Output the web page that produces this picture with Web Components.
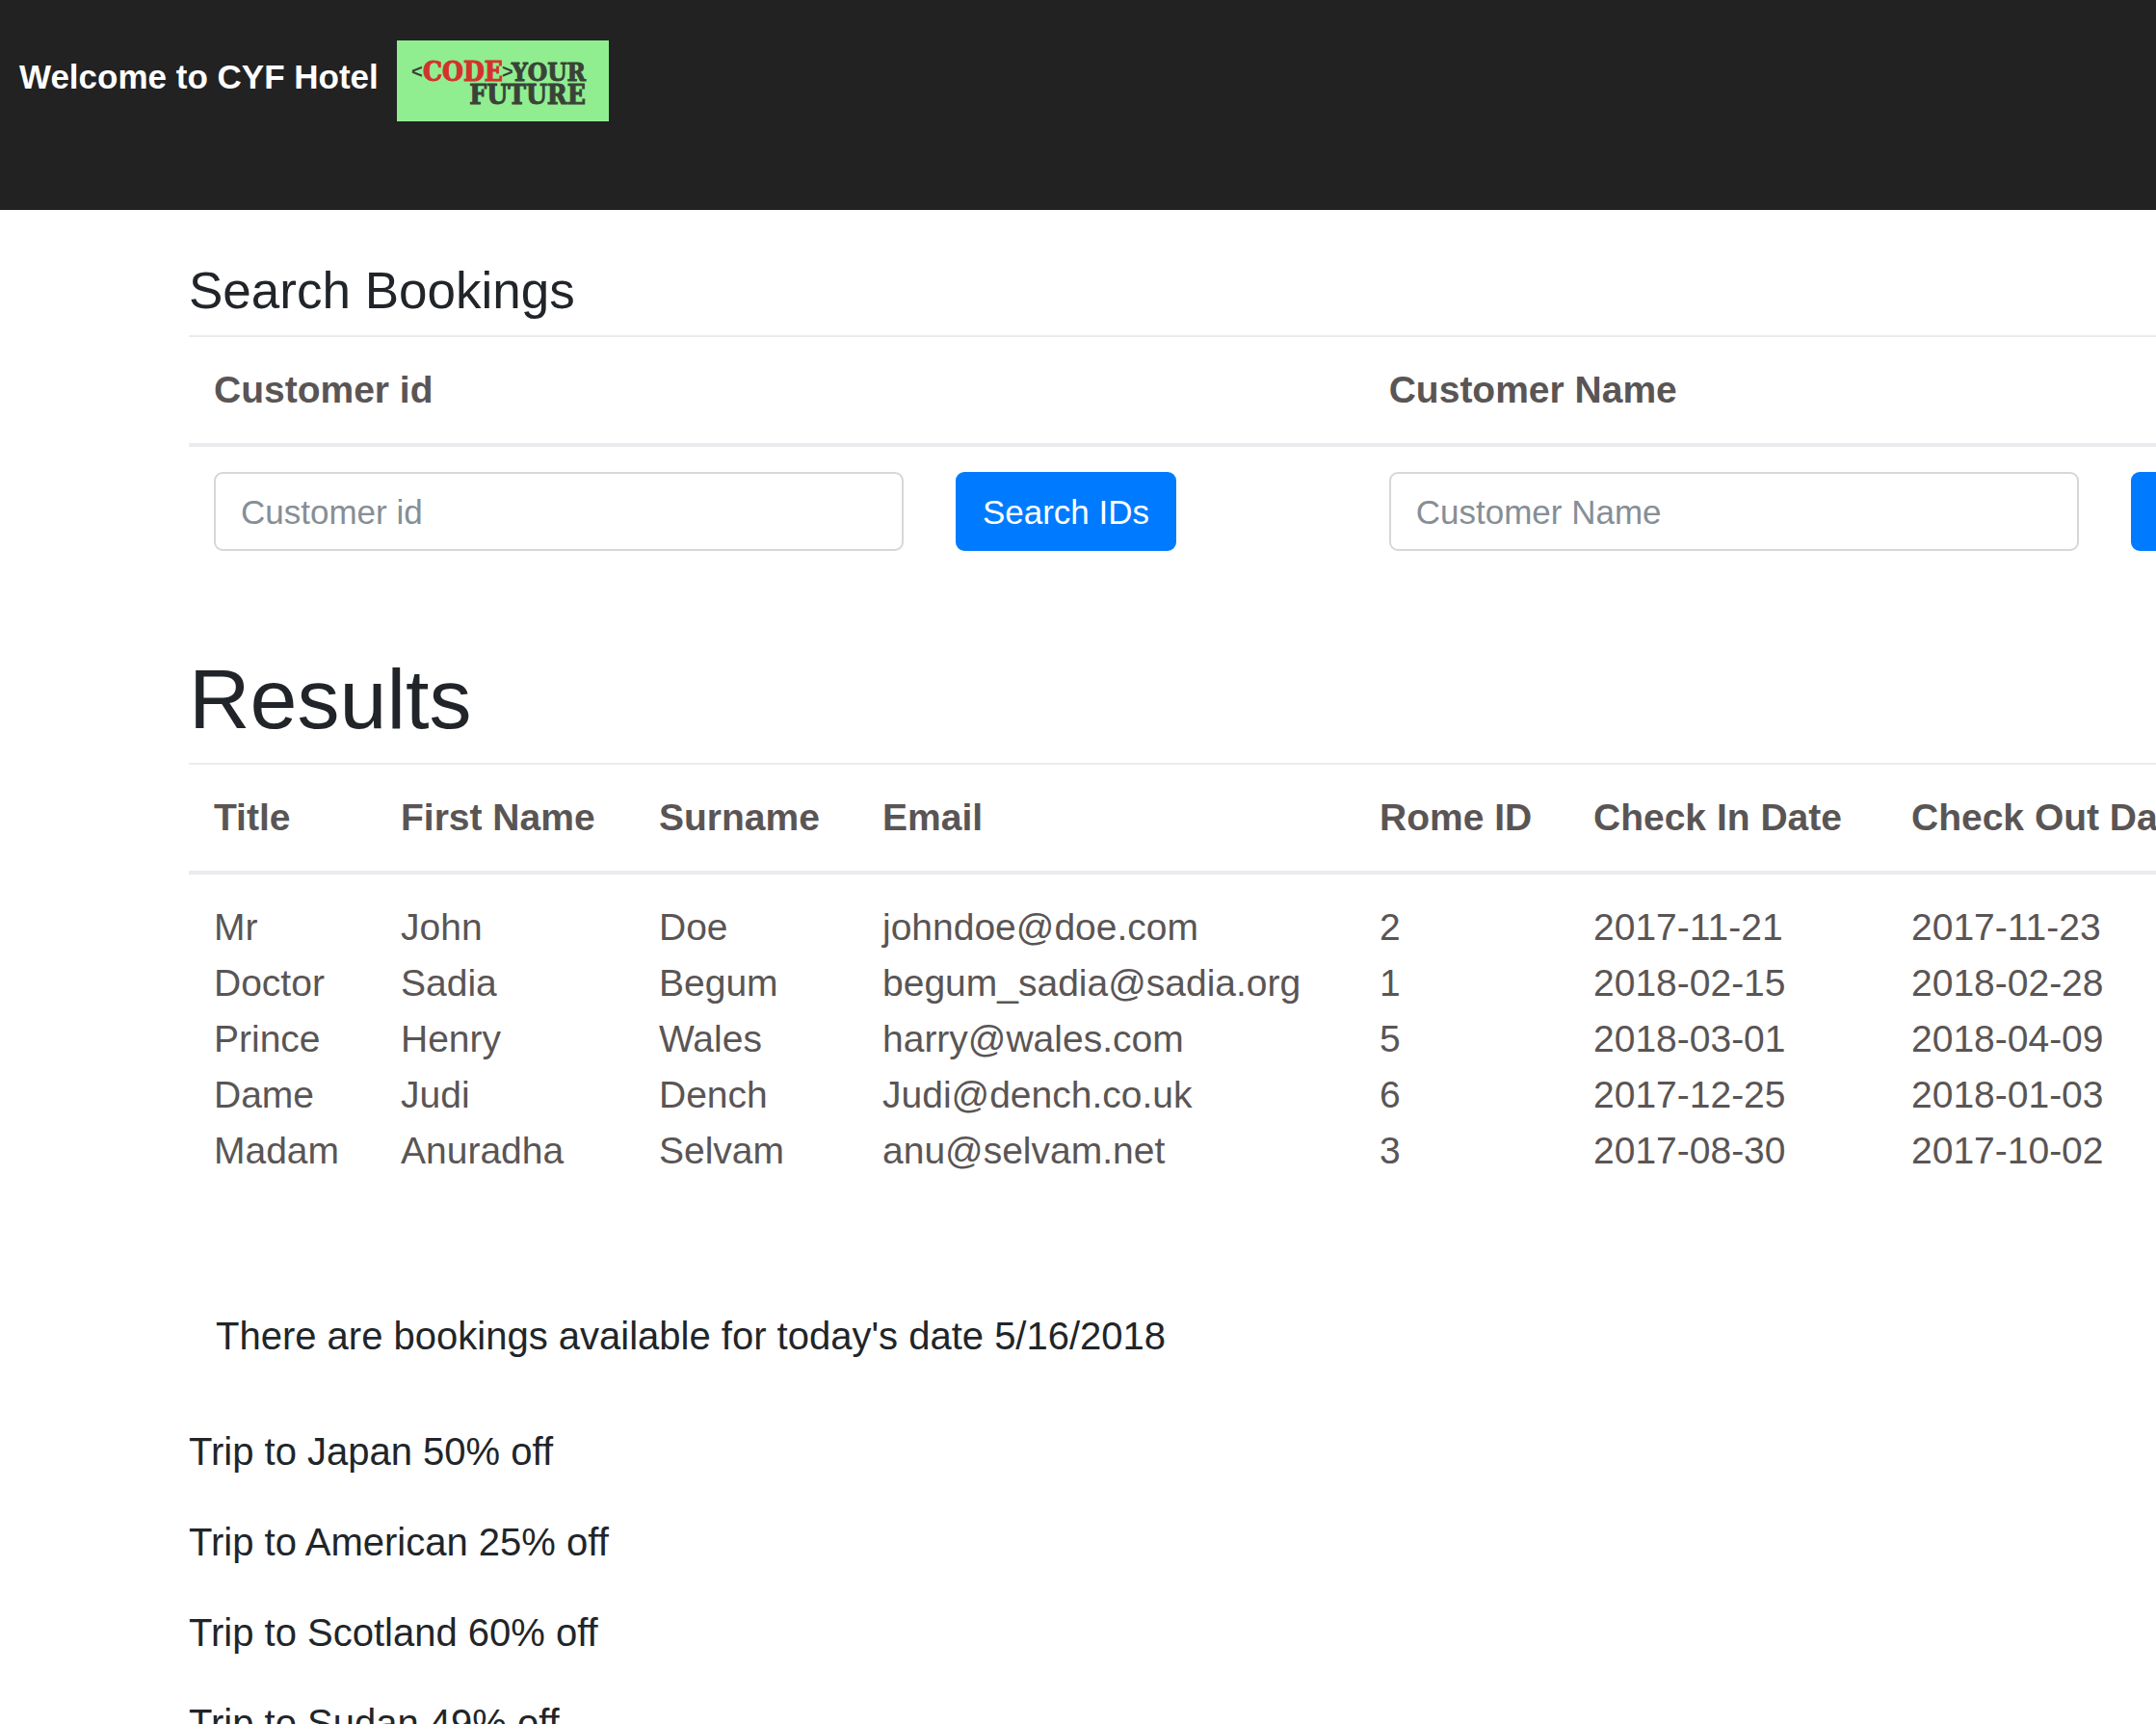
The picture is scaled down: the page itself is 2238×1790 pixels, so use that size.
<!DOCTYPE html>
<html lang="en">
<head>
<meta charset="utf-8">
<title>CYF Hotel</title>
<style>
  body {
    margin: 0;
    height: 100vh;
    overflow: hidden;
    background: #fff;
    color: #212529;
    font-family: "Liberation Sans", Arial, sans-serif;
    font-size: 39px;
    line-height: 58px;
    --table-text: #5a5555;
    --line: #e9ebee;
  }
</style>
</head>
<body>
<hotel-app></hotel-app>

<script>
const logoTemplate = `
  <style>
    :host { display: block; width: 220px; height: 84px; background: #90ee90; }
    svg { display: block; }
    text {
      font-family: "DejaVu Serif Condensed", "DejaVu Serif", serif;
      font-weight: bold;
      font-size: 28px;
      fill: #3a4238;
      stroke: #3a4238;
    }
    .code { fill: #d2322d; stroke: #d2322d; }
    .your { font-size: 26px; }
    .bracket { font-family: "Liberation Sans", sans-serif; font-size: 20px; stroke: none; }
  </style>
  <svg width="220" height="84" viewBox="0 0 220 84" role="img" aria-label="Code Your Future">
    <text class="bracket" x="15" y="39">&lt;</text>
    <text class="code" x="27" y="42">CODE</text>
    <text class="bracket" x="109" y="39">&gt;</text>
    <text class="your" x="196" y="42" text-anchor="end">YOUR</text>
    <text x="196" y="66" text-anchor="end">FUTURE</text>
  </svg>`;

class CyfLogo extends HTMLElement {
  constructor() {
    super();
    this.attachShadow({ mode: 'open' }).innerHTML = logoTemplate;
  }
}

const headerTemplate = `
  <style>
    :host { display: block; }
    header {
      display: flex;
      align-items: flex-start;
      gap: 19px;
      padding: 42px 20px 92px;
      background: #222;
      color: #fff;
    }
    h1 { margin: 0; font-size: 35px; line-height: 76px; }
  </style>
  <header>
    <h1><slot></slot></h1>
    <cyf-logo></cyf-logo>
  </header>`;

class HotelHeader extends HTMLElement {
  constructor() {
    super();
    this.attachShadow({ mode: 'open' }).innerHTML = headerTemplate;
  }
}

const searchFieldTemplate = `
  <style>
    :host { display: block; color: var(--table-text); }
    label {
      display: block;
      padding: 26px;
      border-top: 2px solid var(--line);
      border-bottom: 4px solid var(--line);
      font-weight: bold;
    }
    form {
      display: grid;
      grid-template-columns: 9fr 5fr;
      gap: 54px;
      padding: 26px;
    }
    input, button {
      box-sizing: border-box;
      height: 82px;
      padding: 2px 26px 0;
      border: 2px solid #d5d7da;
      border-radius: 9px;
      font: inherit;
      font-size: 35px;
    }
    input { width: 100%; background: #fff; color: #495057; }
    input::placeholder { color: #868e96; opacity: 1; }
    button {
      justify-self: start;
      border-color: #007bff;
      background: #007bff;
      color: #fff;
      white-space: nowrap;
      cursor: pointer;
    }
  </style>
  <label for="query"></label>
  <form>
    <input id="query" type="text">
    <button type="submit"><slot></slot></button>
  </form>`;

class SearchField extends HTMLElement {
  constructor() {
    super();
    this.attachShadow({ mode: 'open' }).innerHTML = searchFieldTemplate;
  }

  connectedCallback() {
    var label = this.getAttribute('label');
    this.shadowRoot.querySelector('label').textContent = label;
    this.shadowRoot.querySelector('input').placeholder = label;
    this.shadowRoot.querySelector('form').onsubmit = function (event) {
      event.preventDefault();
    };
  }
}

const bookings = [
  ['Mr', 'John', 'Doe', 'johndoe@doe.com', '2', '2017-11-21', '2017-11-23'],
  ['Doctor', 'Sadia', 'Begum', 'begum_sadia@sadia.org', '1', '2018-02-15', '2018-02-28'],
  ['Prince', 'Henry', 'Wales', 'harry@wales.com', '5', '2018-03-01', '2018-04-09'],
  ['Dame', 'Judi', 'Dench', 'Judi@dench.co.uk', '6', '2017-12-25', '2018-01-03'],
  ['Madam', 'Anuradha', 'Selvam', 'anu@selvam.net', '3', '2017-08-30', '2017-10-02']
];

const resultsTemplate = `
  <style>
    :host { display: block; }
    table {
      width: 100%;
      table-layout: fixed;
      border-collapse: separate;
      border-spacing: 0;
      color: var(--table-text);
      white-space: nowrap;
    }
    th {
      padding: 26px;
      border-top: 2px solid var(--line);
      border-bottom: 4px solid var(--line);
      text-align: left;
    }
    td { padding: 0 26px; }
    tbody tr:first-child td { padding-top: 26px; }
    tbody tr:last-child td { padding-bottom: 26px; }
  </style>
  <table>
    <colgroup>
      <col style="width: 194px">
      <col style="width: 268px">
      <col style="width: 232px">
      <col style="width: 516px">
      <col style="width: 222px">
      <col style="width: 330px">
      <col>
    </colgroup>
    <thead>
      <tr>
        <th>Title</th><th>First Name</th><th>Surname</th><th>Email</th>
        <th>Rome ID</th><th>Check In Date</th><th>Check Out Date</th>
      </tr>
    </thead>
    <tbody></tbody>
  </table>`;

class BookingResults extends HTMLElement {
  constructor() {
    super();
    this.attachShadow({ mode: 'open' }).innerHTML = resultsTemplate;
  }

  connectedCallback() {
    this.shadowRoot.querySelector('tbody').innerHTML = bookings.map(function (row) {
      return '<tr>' + row.map(cell => `<td>${cell}</td>`).join('') + '</tr>';
    }).join('');
  }
}

const offersTemplate = `
  <style>
    :host { display: block; }
    ul {
      display: flex;
      flex-direction: column;
      gap: 36px;
      margin: 0;
      padding: 0;
      list-style: none;
    }
  </style>
  <ul>
    <li>Trip to Japan 50% off</li>
    <li>Trip to American 25% off</li>
    <li>Trip to Scotland 60% off</li>
    <li>Trip to Sudan 49% off</li>
  </ul>`;

class TripOffers extends HTMLElement {
  constructor() {
    super();
    this.attachShadow({ mode: 'open' }).innerHTML = offersTemplate;
  }
}

const appTemplate = `
  <style>
    :host { display: block; }
    /* the bookings grid is wider than the window and runs off to the right */
    main { width: 109%; margin-left: 196px; }
    h2, h3, p { margin: 0; font-weight: normal; }
    h3 { padding: 55px 0 17px; font-size: 53px; line-height: 58px; }
    h2 { padding: 80px 0 18px; font-size: 88px; line-height: 96px; }
    .search { display: grid; grid-template-columns: 1fr 1fr; }
    .today { padding: 108px 28px 62px; }
    .today, trip-offers { font-size: 40px; }
  </style>
  <hotel-header>Welcome to CYF Hotel</hotel-header>
  <main>
    <h3>Search Bookings</h3>
    <div class="search">
      <search-field label="Customer id">Search IDs</search-field>
      <search-field label="Customer Name">Search Names</search-field>
    </div>
    <h2>Results</h2>
    <booking-results></booking-results>
    <p class="today">There are bookings available for today's date 5/16/2018</p>
    <trip-offers></trip-offers>
  </main>`;

class HotelApp extends HTMLElement {
  constructor() {
    super();
    this.attachShadow({ mode: 'open' }).innerHTML = appTemplate;
  }
}

customElements.define('cyf-logo', CyfLogo);
customElements.define('hotel-header', HotelHeader);
customElements.define('search-field', SearchField);
customElements.define('booking-results', BookingResults);
customElements.define('trip-offers', TripOffers);
customElements.define('hotel-app', HotelApp);
</script>
</body>
</html>
